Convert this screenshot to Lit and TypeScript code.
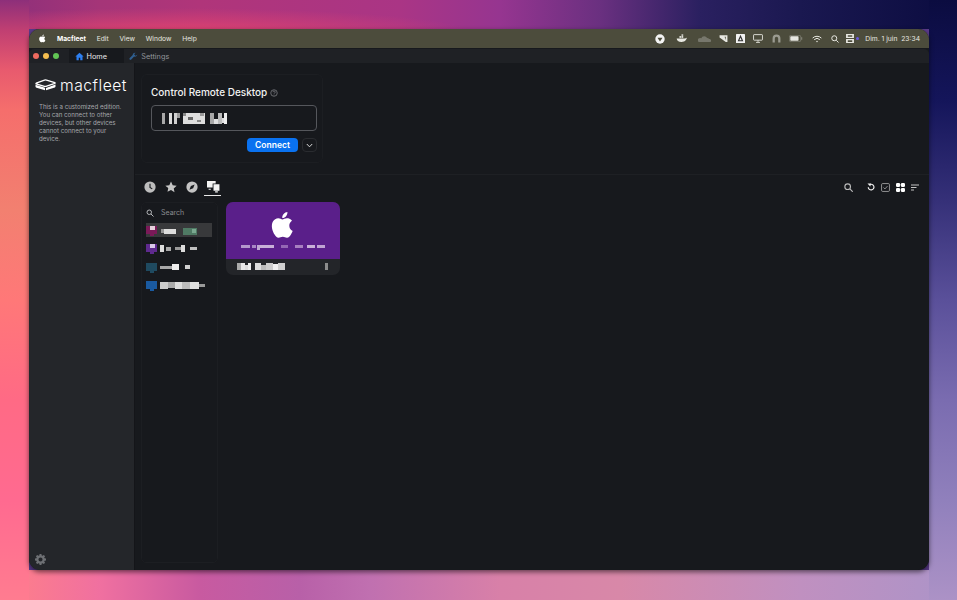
import { LitElement, html, css } from "lit";
import { customElement } from "lit/decorators.js";

type B = [number, number, number, number, string];
const blocks = (items: B[]) =>
  items.map(
    ([x, y, w, h, c]) =>
      html`<i class="blk" style="left:${x}px;top:${y}px;width:${w}px;height:${h}px;background:${c}"></i>`
  );

const apple = (s: number) => html`<svg width=${s} height=${s} viewBox="0 0 24 24" fill="#fff"><path d="M17.05 12.54c-.03-2.6 2.12-3.85 2.22-3.91-1.21-1.77-3.09-2.01-3.76-2.04-1.6-.16-3.12.94-3.93.94-.81 0-2.06-.92-3.39-.89-1.74.03-3.35 1.01-4.25 2.57-1.81 3.14-.46 7.8 1.3 10.35.86 1.25 1.89 2.65 3.24 2.6 1.3-.05 1.79-.84 3.36-.84 1.57 0 2.01.84 3.38.81 1.4-.02 2.28-1.27 3.14-2.53.99-1.45 1.39-2.85 1.42-2.93-.03-.01-2.72-1.04-2.73-4.13zM14.46 4.9c.72-.87 1.2-2.07 1.07-3.27-1.03.04-2.28.69-3.02 1.55-.66.77-1.24 2-1.09 3.17 1.15.09 2.32-.58 3.04-1.45z"/></svg>`;

const gear = html`<svg width="11" height="11" viewBox="0 0 24 24" fill="#6e7074"><path fill-rule="evenodd" d="M10 0h4l.6 3.100 1.900.8L19.200 2 22 4.800l-1.900 2.700.8 1.900L24 10v4l-3.100.6-.8 1.900 1.900 2.700L19.200 22l-2.700-1.900-1.900.8L14 24h-4l-.6-3.100-1.900-.8L4.800 22 2 19.200l1.900-2.700-.8-1.900L0 14v-4l3.100-.6.8-1.900L2 4.800 4.800 2l2.700 1.900 1.900-.8zM12 7.500a4.500 4.500 0 1 0 0 9 4.500 4.500 0 0 0 0-9z"/></svg>`;

@customElement("app-root")
export class AppRoot extends LitElement {
  static styles = css`
    :host {
      display: block;
      width: 957px;
      height: 600px;
      overflow: hidden;
      position: relative;
      font-family: Inter, "Liberation Sans", sans-serif;
      color: #fff;
      background-color: #5a3a8a;
      background-repeat: no-repeat;
      background-image:
        linear-gradient(180deg, #8d2f7a 0, #c03f72 30px, #e85a6e 70px, #f56e6c 110px, #f28070 210px, #ff7878 300px, #ff6a85 400px, #ff6a90 500px, #ff7c90 600px),
        linear-gradient(180deg, #0b0c40 0, #14155a 100px, #353078 200px, #5a509a 300px, #7a6cb0 400px, #9080bc 500px, #ac92c6 600px),
        radial-gradient(300px 24px at 170px 32px, rgba(236, 70, 110, 0.8), rgba(236, 70, 110, 0)),
        linear-gradient(90deg, #8d2f7a 0, #a53578 100px, #b0357a 200px, #aa3585 400px, #963590 500px, #6a3080 600px, #2a2060 700px, #1a1850 800px, #0b0c40 957px),
        radial-gradient(150px 22px at 190px 568px, rgba(165, 45, 135, 0.85), rgba(165, 45, 135, 0)),
        linear-gradient(90deg, #ff8088 0, #f070a0 100px, #c85aa0 200px, #b860a8 300px, #c070b0 370px, #d880a8 500px, #d888a8 620px, #c090c0 800px, #ac94c8 957px);
      background-size: 29px 600px, 28px 600px, 957px 29px, 957px 29px, 957px 30px, 957px 30px;
      background-position: 0 0, 929px 0, 0 0, 0 0, 0 570px, 0 570px;
    }
    .blk { position: absolute; display: block; filter: blur(0.7px); }
    .win {
      position: absolute;
      left: 29px;
      top: 29px;
      width: 900px;
      height: 541px;
      border-radius: 11px;
      overflow: hidden;
      display: flex;
      flex-direction: column;
      background: #17191d;
    }
    .shadow { position: absolute; left: 29px; top: 29px; width: 900px; height: 541px; border-radius: 11px; box-shadow: 0 2px 5px rgba(0, 0, 0, 0.55); }
    .menubar {
      height: 19px;
      flex: none;
      background: #4c4c3c;
      display: flex;
      align-items: center;
      padding: 0 9px 0 9px;
      font-size: 6.700px;
      color: #e8e8e0;
    }
    .menubar b { font-weight: 700; color: #fff; margin-left: 10px; }
    .menubar span.m { margin-left: 10.800px; }
    .spacer { flex: 1; }
    .status { display: flex; align-items: center; }
    .status > * { flex: none; }
    .clock { font-size: 6.750px; margin-left: 6.500px; }
    .tabbar {
      height: 14px;
      flex: none;
      margin-top: 1px;
      background: #1f2125;
      display: flex;
      align-items: stretch;
      font-size: 7.300px;
      padding-left: 40px;
      border-radius: 5px 5px 0 0;
    }
    .dots { position: absolute; left: 4px; top: 23.500px; display: flex; gap: 4px; }
    .dot { width: 6px; height: 6px; border-radius: 50%; }
    .tab { display: flex; align-items: center; gap: 3px; width: 55px; box-sizing: border-box; padding-left: 5.500px; color: #e8e8ea; }
    .tab.on { background: #17191d; }
    .tab.off { color: #94969b; padding-left: 4.500px; gap: 3.800px; }
    .body { flex: 1; display: flex; min-height: 0; }
    .side {
      width: 106px;
      box-sizing: border-box;
      flex: none;
      background: #24262a;
      border-right: 1px solid #141519;
      padding: 14px 0 0 6px;
      display: flex;
      flex-direction: column;
    }
    .logo { display: flex; align-items: center; gap: 4px; height: 16px; }
    .logo span { font-size: 15.700px; font-weight: 300; letter-spacing: 0.5px; color: #fff; }
    .note { font-size: 6.150px; line-height: 8px; color: #a6a8ac; margin: 10.300px 0 0 4px; white-space: nowrap; }
    .gear { margin-top: auto; padding-bottom: 5px; line-height: 0; }
    .main { flex: 1; display: flex; flex-direction: column; min-width: 0; background: #17191d; }
    .ctl {
      width: 182px;
      height: 89px;
      box-sizing: border-box;
      margin: 11px 0 0 6px;
      border: 1px solid #1c1e22;
      border-radius: 6px;
      padding: 12px 9px 0;
      display: flex;
      flex-direction: column;
      flex: none;
    }
    .ctl h2 { margin: 0; font-size: 10px; line-height: 11px; font-weight: 500; color: #f2f2f2; display: flex; align-items: center; gap: 3px; }
    .field {
      margin-top: 7px;
      height: 26px;
      width: 166px;
      flex: none;
      border: 1px solid #55575c;
      border-radius: 4px;
      box-sizing: border-box;
      position: relative;
      background: #17191d;
    }
    .row { display: flex; justify-content: flex-end; align-items: center; gap: 4px; margin-top: 7px; width: 166px; }
    .btn {
      width: 51px; height: 14px; border-radius: 4px; background: #0a72f0; color: #fff;
      font-size: 8.500px; font-weight: 600; display: flex; align-items: center; justify-content: center;
    }
    .chev { width: 15px; height: 14px; border: 1px solid #2a2c30; border-radius: 4px; box-sizing: border-box; display: flex; align-items: center; justify-content: center; }
    .rule { height: 1px; background: #1e2024; margin-top: 11px; flex: none; }
    .toolbar { height: 26px; flex: none; box-sizing: border-box; margin-top: 1px; padding: 0 10px 4px 8px; display: flex; align-items: center; position: relative; }
    .ic { display: flex; align-items: center; justify-content: center; width: 14px; height: 14px; margin-right: 7px; }
    .under { position: absolute; left: 69px; top: 19px; width: 17px; height: 1px; background: #e8e8e8; }
    .right { margin-left: auto; display: flex; align-items: center; gap: 6px; }
    .right .s { margin-right: 8px; }
    .content { flex: 1; display: flex; min-height: 0; padding-left: 6px; }
    .list {
      width: 77px;
      flex: none;
      margin-bottom: 7px;
      border: 1px solid #1c1e22;
      border-radius: 5px;
      position: relative;
      box-sizing: border-box;
    }
    .search { position: absolute; left: 4px; top: 5px; display: flex; align-items: center; gap: 7px; font-size: 7px; color: #8a8c90; }
    .sel { position: absolute; left: 4px; top: 20px; width: 66px; height: 14px; background: #38393b; }
    .card {
      position: relative;
      width: 114px;
      height: 73px;
      margin-left: 8px;
      border-radius: 7px;
      overflow: hidden;
      background: #232529;
      flex: none;
    }
    .top { height: 57px; background: #5a1f8a; position: relative; display: flex; justify-content: center; padding-top: 8px; box-sizing: border-box; }
  `;

  render() {
    return html`
      <div class="shadow"></div>
      <div class="win">
        <div class="menubar">
          ${apple(9)}
          <b>Macfleet</b>
          <span class="m">Edit</span><span class="m">View</span><span class="m">Window</span><span class="m">Help</span>
          <span class="spacer"></span>
          ${this.status()}
          <span class="clock">Dim. 1 juin&nbsp; 23:34</span>
        </div>
        <div class="tabbar">
          <div class="tab on">
            <svg width="9" height="9" viewBox="0 0 24 24" fill="#2d7ff0"><path d="M12 2 1 12h3v10h6v-7h4v7h6V12h3z"/></svg>
            <span>Home</span>
          </div>
          <div class="tab off">
            <svg width="9" height="9" viewBox="0 0 24 24" fill="#2f5f90"><path d="M22 6.500a6 6 0 0 1-8.200 5.600L6 20a2.800 2.800 0 0 1-4-4l7.900-7.800A6 6 0 0 1 17.500 2L13.500 6l4.500 4.500 4-4z"/></svg>
            <span>Settings</span>
          </div>
        </div>
        <div class="dots">
          <i class="dot" style="background:#ee6a5f"></i><i class="dot" style="background:#f5bd4f"></i><i class="dot" style="background:#61c554"></i>
        </div>
        <div class="body">
          <aside class="side">
            <div class="logo">
              <svg width="21" height="12" viewBox="0 0 21 12">
                <path d="M1.200 4.200 9.500 1.100Q10.500.8 11.500 1.100L19.800 3.600Q20.500 4 19.800 4.400L11 7.300Q10.200 7.500 9.400 7.300L1.200 5Q.6 4.600 1.200 4.200Z" fill="none" stroke="#fff" stroke-width="1.300"/>
                <path d="M.5 5.800 9.300 8.400Q10 8.700 10 9.200V11.300L1.500 8.800Q.5 8.500.5 7.800Z" fill="#fff"/>
                <path d="M11 9.100 20.500 5.400V7.600Q20.500 8.200 19.800 8.500L11 11.300Z" fill="#fff"/>
              </svg>
              <span>macfleet</span>
            </div>
            <div class="note">This is a customized edition.<br />You can connect to other<br />devices, but other devices<br />cannot connect to your<br />device.</div>
            <div class="gear">${gear}</div>
          </aside>
          <main class="main">
            <section class="ctl">
              <h2>Control Remote Desktop
                <svg width="8" height="8" viewBox="0 0 16 16" fill="none" stroke="#8a8c90" stroke-width="1.400"><circle cx="8" cy="8" r="6.500"/><path d="M5.800 6.300a2.200 2.200 0 1 1 3.300 1.900c-.7.400-1.100.8-1.100 1.600M8 11.300v1.200"/></svg>
              </h2>
              <div class="field">
                ${blocks([
                  [10,7,3,11,"#a8a8a8"],[17,7,3,11,"#dcdcdc"],[22,7,3,11,"#d0d0d0"],[25,7,3,5,"#9a9a9a"],
                  [31,7,22,11,"#dedede"],[31,7,3,3,"#888"],[36,11,5,3,"#666"],[45,14,4,2,"#888"],[48,7,4,3,"#999"],
                  [58,7,4,11,"#a8a8a8"],[62,13,4,5,"#e0e0e0"],[66,7,4,11,"#bcbcbc"],[70,12,4,5,"#ddd"],[72,7,3,11,"#eee"]
                ])}
              </div>
              <div class="row">
                <div class="btn">Connect</div>
                <div class="chev"><svg width="7" height="5" viewBox="0 0 7 5" fill="none" stroke="#d8d8d8" stroke-width="1"><path d="M.8 1 3.500 3.800 6.200 1"/></svg></div>
              </div>
            </section>
            <div class="rule"></div>
            ${this.toolbar()}
            <div class="content">
              <div class="list">
                <div class="search">
                  <svg width="8" height="8" viewBox="0 0 16 16" fill="none" stroke="#b5b7ba" stroke-width="2"><circle cx="6.500" cy="6.500" r="4.500"/><path d="m10 10 5 5"/></svg>
                  <span>Search</span>
                </div>
                <div class="sel"></div>
                ${this.rows()}
              </div>
              <div class="card">
                <div class="top">
                  ${apple(30)}
                  ${blocks([
                    [15,43,9,3,"#b498cc"],[25.500,43,4,3,"#a888c4"],[31,43,3,5,"#c0a8d4"],[34,43,14,3,"#c8b0d8"],
                    [55,43,7,3,"#9468b4"],[69,43,8,3,"#a880c0"],[81,43,8,3,"#c8b0d8"],[91,43,8,3,"#c0a4d4"]
                  ])}
                </div>
                ${blocks([
                  [11,61,4,7,"#aaa"],[15,61,4,7,"#e8e8e8"],[19,63,3,5,"#ddd"],[22,61,3,7,"#eee"],
                  [29,61,6,7,"#ddd"],[35,63,5,5,"#bbb"],[40,61,7,7,"#ccc"],[47,62,5,6,"#f0f0f0"],[52,61,7,7,"#cfcfcf"],
                  [99,61,3,7,"#8c8c8c"]
                ])}
              </div>
            </div>
          </main>
        </div>
      </div>
    `;
  }

  rows() {
    const r = (top: number, mid: number, c: string, c2: string, bits: [number, number, number, string][]) => {
      const base: B[] = [[4, top, 11, 8, c], [7.500, top + 8, 4, 2, c]];
      if (c2) base.push([8, top, 5, 4, c2]);
      const txt = bits.map(([x, w, h, col]) => [x, mid - h / 2, w, h, col] as B);
      return blocks([...base, ...txt]);
    };
    return [
      r(23, 28, "#7a1a58", "#e6d0dc", [[19,3,4,"#999"],[22,12,5,"#ddd"],[41,14,7,"#4f7a64"],[50,4,4,"#7aa890"]]),
      r(40.500, 45.500, "#5e2a8e", "#d8c8e8", [[18,4,7,"#ddd"],[24,5,4,"#aaa"],[33,6,3,"#999"],[39,4,7,"#ddd"],[48,7,3,"#c0c0c0"]]),
      r(60, 64, "#1f4a60", "", [[18,12,3,"#a8a8a8"],[30,7,6,"#eee"],[43,5,4,"#d0d0d0"]]),
      r(78, 82, "#1a5aa0", "", [[18,8,7,"#ccc"],[26,7,6,"#aaa"],[33,7,7,"#ddd"],[40,8,7,"#bbb"],[48,9,7,"#e0e0e0"],[57,6,3,"#999"]]),
    ];
  }

  toolbar() {
    return html`
      <div class="toolbar">
        <span class="ic"><svg width="12" height="12" viewBox="0 0 16 16"><circle cx="8" cy="8" r="7.500" fill="#bdbdbd"/><path d="M8 3.500V8.500L11 10.500" fill="none" stroke="#17191d" stroke-width="1.500"/></svg></span>
        <span class="ic"><svg width="12" height="12" viewBox="0 0 24 24" fill="#c4c4c4"><path d="m12 1 3.400 7.300 7.900 1-5.800 5.500 1.500 7.900L12 18l-7 3.700 1.500-7.900L.7 9.300l7.900-1z"/></svg></span>
        <span class="ic"><svg width="12" height="12" viewBox="0 0 16 16"><circle cx="8" cy="8" r="7.500" fill="#c4c4c4"/><path d="M11.500 4.500 9.500 9.500 4.500 11.500 6.500 6.500Z" fill="#17191d"/></svg></span>
        <span class="ic"><svg width="13" height="12" viewBox="0 0 12 11" fill="#f4f4f4"><path d="M0 0h8v2.300H5.200V6H0zM1.500 7h2v1h-2zM6 3h5.500v6H6zM7.500 9.500H10v1H7.500z"/></svg></span>
        <i class="under"></i>
        <div class="right">
          <svg class="s" width="9" height="9" viewBox="0 0 16 16" fill="none" stroke="#bbb" stroke-width="2"><circle cx="6.500" cy="6.500" r="5"/><path d="m10.500 10.500 5 5"/></svg>
          <svg width="8" height="8" viewBox="0 0 16 16" fill="none" stroke="#f0f0f0" stroke-width="2.400"><path d="M2.500 8.500A5.700 5.700 0 1 0 5.500 3.200"/><path d="M1 1 8 .8 6.500 7Z" fill="#f0f0f0" stroke="none"/></svg>
          <svg width="9" height="9" viewBox="0 0 16 16" fill="none" stroke="#bdbdbd" stroke-width="1.300"><rect x="1" y="1" width="14" height="14" rx="2"/><path d="m4.500 8 2.500 2.500 4.500-5"/></svg>
          <svg width="9" height="9" viewBox="0 0 16 16" fill="#fff"><rect width="7.300" height="7.300" rx="2.200"/><rect x="8.700" width="7.300" height="7.300" rx="2.200"/><rect y="8.700" width="7.300" height="7.300" rx="2.200"/><rect x="8.700" y="8.700" width="7.300" height="7.300" rx="2.200"/></svg>
          <svg width="8" height="7" viewBox="0 0 16 14" fill="#c4c4c4"><rect y="1" width="16" height="2"/><rect y="6" width="11" height="2"/><rect y="11" width="6" height="2"/></svg>
        </div>
      </div>
    `;
  }

  status() {
    const c = "#e8e8e2";
    return html`<div class="status">
      <svg width="10" height="10" viewBox="0 0 16 16" style="margin-right:11px"><circle cx="8" cy="8" r="7.500" fill="#f4f4f4"/><path d="M4 6h8l-4 6z" fill="#4c4c3c"/></svg>
      <svg width="11" height="9" viewBox="0 0 16 12" fill=${c} style="margin-right:10.500px"><path d="M1 6h12c2-.2 2.500-1 3-1.500-.5 2-2 6.500-8 6.500C3.500 11 1.300 9 1 6Z"/><rect x="5" y="2.500" width="2.500" height="2.500"/><rect x="8" y="2.500" width="2.500" height="2.500"/><rect x="8" y="0" width="2.500" height="2"/></svg>
      <svg width="13" height="6" viewBox="0 0 20 9" fill="#77776c" style="margin-right:8px"><path d="M1 9a3 3 0 0 1 1-5.500 3 3 0 0 1 3 0A5 5 0 0 1 14 3a3 3 0 0 1 3 1.500A2.500 2.500 0 0 1 19 9Z"/></svg>
      <svg width="9" height="9" viewBox="0 0 16 16" fill=${c} style="margin-right:8px"><path d="M1 2h14v12h-3L1 6Z"/><path d="M10 5h2v6Z" fill="#4c4c3c"/></svg>
      <svg width="9" height="9" viewBox="0 0 16 16" style="margin-right:8px"><rect width="16" height="16" fill="#f2f2f2" rx="1"/><path d="M8 4 4.500 12h7Z" fill="none" stroke="#333" stroke-width="2"/></svg>
      <svg width="10" height="9" viewBox="0 0 18 16" fill="none" stroke=${c} stroke-width="1.600" style="margin-right:9px"><rect x="1" y="1" width="16" height="10" rx="1"/><path d="M9 11v3M5.500 15h7"/></svg>
      <svg width="9" height="9" viewBox="0 0 16 16" fill="#9a9a90" style="margin-right:8.500px"><path fill-rule="evenodd" d="M8 1a7 7 0 0 1 7 7v7h-4V8a3 3 0 0 0-6 0v7H1V8a7 7 0 0 1 7-7Z"/></svg>
      <svg width="14" height="7" viewBox="0 0 22 11" fill="none" style="margin-right:9px"><rect x=".5" y=".5" width="18" height="10" rx="2.500" stroke="#8a8a80"/><rect x="2" y="2" width="13" height="7" rx="1" fill=${c}/><path d="M20 3.500v4" stroke="#8a8a80" stroke-width="1.500"/></svg>
      <svg width="10" height="8" viewBox="0 0 16 12" fill="none" stroke=${c} stroke-width="1.600" style="margin-right:9px"><path d="M1 4.500a10 10 0 0 1 14 0M3.500 7a6.500 6.500 0 0 1 9 0"/><circle cx="8" cy="10" r="1.200" fill=${c} stroke="none"/></svg>
      <svg width="8" height="8" viewBox="0 0 16 16" fill="none" stroke=${c} stroke-width="2" style="margin-right:7px"><circle cx="6.500" cy="6.500" r="5"/><path d="m10.500 10.500 4.500 4.500"/></svg>
      <svg width="8" height="9" viewBox="0 0 14 16" fill=${c} style="margin-right:1.500px"><path fill-rule="evenodd" d="M0 0h14v7H0zM3 2v3h8V2zM0 9h14v7H0zM3 11v3h8v-3z"/></svg>
      <svg width="3" height="3" viewBox="0 0 3 3"><circle cx="1.500" cy="1.500" r="1.500" fill="#6a5ae0"/></svg>
    </div>`;
  }
}
